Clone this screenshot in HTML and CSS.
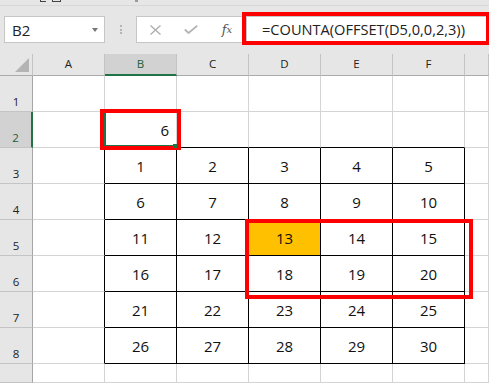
FILE: index.html
```html
<!DOCTYPE html>
<html>
<head>
<meta charset="utf-8">
<link rel="stylesheet" href="styles.css">
</head>
<body>
<div class="app">
  <div class="topstrip">
    <span class="mk mk1"></span><span class="mk mk2"></span><span class="mk mk3"></span>
  </div>
  <div class="fbar">
    <div class="namebox"><span>B2</span><span class="caret"></span></div>
    <div class="sep"><i></i><i></i><i></i></div>
    <div class="fxbox">
      <span class="ico"><svg width="11" height="10" viewBox="0 0 11 10"><path d="M0.5 0.5 L10.5 9.5 M10.5 0.5 L0.5 9.5" stroke="#adadad" stroke-width="1.3" fill="none"/></svg></span>
      <span class="ico"><svg width="14" height="9" viewBox="0 0 14 9"><path d="M0.8 4.5 L4.5 8 L13.2 0.7" stroke="#b5b5b5" stroke-width="1.8" fill="none"/></svg></span>
      <span class="ico fx">f<sub>x</sub></span>
    </div>
    <div class="input">=COUNTA(OFFSET(D5,0,0,2,3))</div>
  </div>
  <div class="sheet">
    <div class="c ch corner"><svg width="14" height="14" viewBox="0 0 14 14"><path d="M14 0 L14 14 L0 14 Z" fill="#b4b4b4"/></svg></div>
    <div class="c ch">A</div>
    <div class="c ch sel-ch">B</div>
    <div class="c ch">C</div>
    <div class="c ch">D</div>
    <div class="c ch">E</div>
    <div class="c ch">F</div>
    <div class="c ch"></div>

    <div class="c rh">1</div>
    <div class="c"></div><div class="c"></div><div class="c"></div><div class="c"></div><div class="c"></div><div class="c"></div><div class="c"></div>

    <div class="c rh sel-rh">2</div>
    <div class="c a2"></div>
    <div class="c tb b2">6</div>
    <div class="c tb"></div><div class="c tb"></div><div class="c tb"></div><div class="c tb"></div>
    <div class="c"></div>

    <div class="c rh">3</div>
    <div class="c tr"></div>
    <div class="c t">1</div><div class="c t">2</div><div class="c t">3</div><div class="c t">4</div><div class="c t">5</div>
    <div class="c"></div>

    <div class="c rh">4</div>
    <div class="c tr"></div>
    <div class="c t">6</div><div class="c t">7</div><div class="c t">8</div><div class="c t">9</div><div class="c t">10</div>
    <div class="c"></div>

    <div class="c rh">5</div>
    <div class="c tr"></div>
    <div class="c t">11</div><div class="c t">12</div><div class="c t hi">13</div><div class="c t">14</div><div class="c t">15</div>
    <div class="c"></div>

    <div class="c rh">6</div>
    <div class="c tr"></div>
    <div class="c t">16</div><div class="c t">17</div><div class="c t">18</div><div class="c t">19</div><div class="c t">20</div>
    <div class="c"></div>

    <div class="c rh">7</div>
    <div class="c tr"></div>
    <div class="c t">21</div><div class="c t">22</div><div class="c t">23</div><div class="c t">24</div><div class="c t">25</div>
    <div class="c"></div>

    <div class="c rh">8</div>
    <div class="c tr"></div>
    <div class="c t">26</div><div class="c t">27</div><div class="c t">28</div><div class="c t">29</div><div class="c t">30</div>
    <div class="c"></div>

    <div class="c rh"></div>
    <div class="c"></div><div class="c"></div><div class="c"></div><div class="c"></div><div class="c"></div><div class="c"></div><div class="c"></div>
  </div>

  <div class="hl hl-f"></div>
  <div class="hl hl-b2"></div>
  <div class="hl hl-range"></div>
  <div class="handle"></div>
</div>
</body>
</html>
```

FILE: styles.css
```css
html, body {
  margin: 0;
  padding: 0;
}
body {
  width: 489px;
  height: 383px;
  overflow: hidden;
  background: #fff;
  font-family: "Open Sans", "Noto Sans", sans-serif;
}
.app {
  position: relative;
  width: 489px;
  height: 383px;
  overflow: hidden;
}
.topstrip {
  height: 5px;
  background: #e6e6e6;
  border-bottom: 1px solid #d8d8d8;
  display: flex;
  align-items: flex-start;
}
.mk {
  display: block;
  height: 2px;
}
.mk1 {
  margin-left: 40px;
  width: 5px;
  border-bottom: 1px solid #444;
  border-left: 1px solid #444;
  height: 1px;
}
.mk2 {
  margin-left: 6px;
  width: 7px;
  height: 1px;
  border: 1px solid #444;
  border-top: none;
}
.mk3 {
  margin-left: 74px;
  width: 3px;
  background: #9a9a9a;
}
.fbar {
  height: 48px;
  box-sizing: border-box;
  background: #e6e6e6;
  display: flex;
  align-items: flex-start;
  padding: 10px 0 0 4px;
}
.namebox {
  width: 101px;
  height: 27px;
  box-sizing: border-box;
  border: 1px solid #c6c6c6;
  background: #fff;
  display: flex;
  align-items: center;
  padding-left: 7px;
  font-size: 15px;
  color: #222;
}
.caret {
  margin-left: auto;
  margin-right: 6px;
  width: 0;
  height: 0;
  border-left: 3.5px solid transparent;
  border-right: 3.5px solid transparent;
  border-top: 4px solid #777;
}
.sep {
  width: 31px;
  height: 27px;
  display: flex;
  flex-direction: column;
  align-items: center;
  justify-content: center;
  gap: 1.5px;
}
.sep i {
  display: block;
  width: 2px;
  height: 2px;
  background: #b4b4b4;
}
.fxbox {
  width: 110px;
  height: 27px;
  box-sizing: border-box;
  border: 1px solid #c6c6c6;
  border-right: none;
  background: #fff;
  display: flex;
  align-items: center;
}
.ico {
  width: 36px;
  display: flex;
  justify-content: center;
  align-items: center;
}
.fx {
  font-family: "DejaVu Serif", "Liberation Serif", serif;
  font-style: italic;
  font-size: 13px;
  color: #555;
  line-height: 1;
}
.fx sub {
  font-size: 10px;
  vertical-align: -1px;
}
.input {
  flex: 1;
  height: 27px;
  box-sizing: border-box;
  border: 1px solid #c6c6c6;
  border-right: none;
  background: #fff;
  padding-left: 15px;
  font-size: 14.6px;
  line-height: 25px;
  color: #222;
  white-space: nowrap;
}
.sheet {
  display: grid;
  grid-template-columns: 33px repeat(6, 72px) 1fr;
  grid-template-rows: 22px repeat(8, 36px) 1fr;
  height: 329px;
}
.c {
  box-sizing: border-box;
  border-right: 1px solid #d4d4d4;
  border-bottom: 1px solid #d4d4d4;
  display: flex;
  align-items: center;
  justify-content: center;
  font-size: 15px;
  color: #111;
}
.ch {
  background: #e6e6e6;
  border-right: 1px solid #c4c4c4;
  border-bottom: 1px solid #ababab;
  font-size: 11.5px;
  color: #222;
  padding-bottom: 2px;
}
.corner {
  justify-content: flex-end;
  align-items: flex-end;
  padding: 0 3px 3px 0;
}
.rh {
  background: #e6e6e6;
  border-right: 1px solid #a6a6a6;
  border-bottom: 1px solid #c4c4c4;
  align-items: flex-end;
  padding-bottom: 2px;
  font-size: 11.5px;
  color: #222;
}
.sel-ch {
  background: #d2d2d2;
  border-bottom: 2px solid #217346;
  color: #1d5e39;
}
.sel-rh {
  background: #d2d2d2;
  border-right: 2px solid #217346;
  color: #1d5e39;
}
.t {
  border-right-color: #000;
  border-bottom-color: #000;
}
.tb {
  border-bottom-color: #000;
}
.tr {
  border-right-color: #000;
}
.a2 {
  border-right-color: #217346;
}
.b2 {
  justify-content: flex-end;
  padding-right: 7px;
  box-shadow: inset 1px -2px 0 #217346;
}
.hi {
  background: #ffc000;
}
.hl {
  position: absolute;
  box-sizing: border-box;
  border: 4px solid #ff0000;
}
.hl-f {
  left: 242px;
  top: 12px;
  width: 248px;
  height: 33px;
}
.hl-b2 {
  left: 100px;
  top: 109px;
  width: 81px;
  height: 41px;
}
.hl-range {
  left: 245px;
  top: 219px;
  width: 228px;
  height: 80px;
}
.handle {
  position: absolute;
  left: 173px;
  top: 144px;
  width: 4px;
  height: 4px;
  background: #217346;
}
```
